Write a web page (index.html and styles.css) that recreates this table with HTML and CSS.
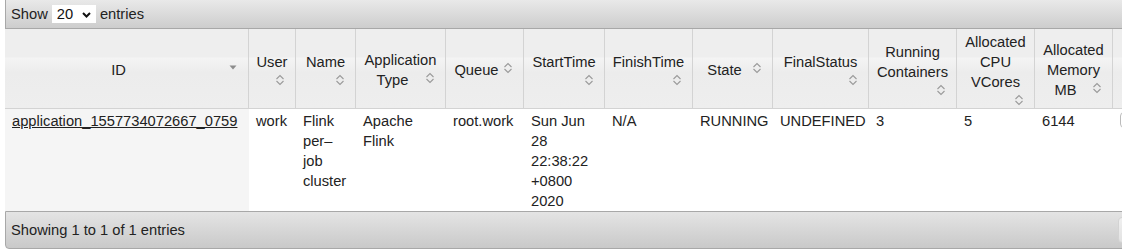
FILE: index.html
```html
<!DOCTYPE html>
<html lang="en">
<head>
<meta charset="utf-8">
<title>Applications</title>
<link rel="stylesheet" href="styles.css">
</head>
<body>
<svg class="icon-defs" aria-hidden="true">
  <symbol id="i-sort" viewBox="0 0 16 16"><path d="M4.5 7 8 3.5 11.5 7M4.5 9 8 12.5 11.5 9" fill="none" stroke="#9a9a9a" stroke-width="1.1"/></symbol>
  <symbol id="i-desc" viewBox="0 0 16 16"><path d="M4.5 5.5h7L8 9.5z" fill="#8c8c8c"/></symbol>
</svg>
<div class="dt-wrapper">
  <div class="toolbar toolbar-top">
    <label class="length">Show <span class="select-wrap"><select class="len-select"><option>20</option><option>40</option><option>60</option><option>80</option><option>100</option></select><svg class="select-caret" viewBox="0 0 9 6"><path d="M1 1 4.5 4.5 8 1" fill="none" stroke="#111" stroke-width="2"/></svg></span> entries</label>
  </div>
  <table class="apps">
    <thead>
      <tr>
        <th class="c-id">ID<span class="sort-icon"><svg><use href="#i-desc"/></svg></span></th>
        <th class="c-user">User<span class="sort-icon"><svg><use href="#i-sort"/></svg></span></th>
        <th class="c-name">Name<span class="sort-icon"><svg><use href="#i-sort"/></svg></span></th>
        <th class="c-type">Application Type<span class="sort-icon"><svg><use href="#i-sort"/></svg></span></th>
        <th class="c-queue">Queue<span class="sort-icon"><svg><use href="#i-sort"/></svg></span></th>
        <th class="c-start">StartTime<span class="sort-icon"><svg><use href="#i-sort"/></svg></span></th>
        <th class="c-finish">FinishTime<span class="sort-icon"><svg><use href="#i-sort"/></svg></span></th>
        <th class="c-state">State<span class="sort-icon"><svg><use href="#i-sort"/></svg></span></th>
        <th class="c-final">FinalStatus<span class="sort-icon"><svg><use href="#i-sort"/></svg></span></th>
        <th class="c-run">Running Containers<span class="sort-icon"><svg><use href="#i-sort"/></svg></span></th>
        <th class="c-cpu">Allocated CPU VCores<span class="sort-icon"><svg><use href="#i-sort"/></svg></span></th>
        <th class="c-mem">Allocated Memory MB<span class="sort-icon"><svg><use href="#i-sort"/></svg></span></th>
        <th class="c-prog"></th>
      </tr>
    </thead>
    <tbody>
      <tr>
        <td class="sorted"><a class="app-link" href="#">application_1557734072667_0759</a></td>
        <td>work</td>
        <td>Flink per–job cluster</td>
        <td>Apache Flink</td>
        <td>root.work</td>
        <td>Sun Jun 28 22:38:22 +0800 2020</td>
        <td>N/A</td>
        <td>RUNNING</td>
        <td>UNDEFINED</td>
        <td>3</td>
        <td>5</td>
        <td>6144</td>
        <td><div class="progress"></div></td>
      </tr>
    </tbody>
  </table>
  <div class="toolbar toolbar-bottom">
    <div class="info">Showing 1 to 1 of 1 entries</div>
    <div class="paginate"><span class="pg-btn"></span></div>
  </div>
</div>
</body>
</html>
```
FILE: styles.css
```css
html, body {
  margin: 0;
  padding: 0;
  background: #fff;
}
body {
  font-family: "Liberation Sans", Arial, Helvetica, sans-serif;
  font-size: 14.7px;
  line-height: 20px;
  color: #222;
  width: 1122px;
  height: 250px;
  overflow: hidden;
}
.icon-defs {
  position: absolute;
  width: 0;
  height: 0;
  overflow: hidden;
}
.dt-wrapper {
  margin-left: 5px;
  width: 1208px;
}
.toolbar {
  display: flex;
  align-items: center;
  padding: 0 5px;
  border: 1px solid #a8a8a8;
}
.toolbar-top {
  height: 28px;
  border-top: none;
  background: linear-gradient(#e9e9e9, #cdcdcd);
}
.length {
  white-space: nowrap;
}
.select-wrap {
  position: relative;
  display: inline-block;
  vertical-align: middle;
  width: 44px;
  height: 18px;
  margin-top: -3px;
}
.len-select {
  -webkit-appearance: none;
  appearance: none;
  display: block;
  width: 44px;
  height: 18px;
  margin: 0;
  padding: 0 0 0 5px;
  border: 0;
  border-radius: 0;
  background: #fff;
  font: inherit;
  line-height: 18px;
  color: #111;
}
.select-caret {
  position: absolute;
  left: 30px;
  top: 7px;
  width: 9px;
  height: 6px;
  pointer-events: none;
}
.apps {
  border-collapse: separate;
  border-spacing: 0;
  table-layout: fixed;
  width: 1208px;
}
.apps th {
  box-sizing: border-box;
  padding: 3px 7px 0;
  font-weight: normal;
  text-align: center;
  vertical-align: middle;
  color: #222;
  border-right: 1px solid #d3d3d3;
  border-bottom: 1px solid #d3d3d3;
  background: linear-gradient(#eeeeee 0%, #eeeeee 35%, #f4f4f4 37%, #ececec 55%, #eeeeee 100%);
}
.sort-icon {
  float: right;
  width: 16px;
  height: 16px;
}
.sort-icon svg {
  display: block;
  width: 16px;
  height: 16px;
}
.c-id { width: 244px; }
.c-user { width: 47px; }
.c-name { width: 60px; }
.c-type { width: 90px; }
.c-queue { width: 78px; }
.c-start { width: 81px; }
.c-finish { width: 88px; }
.c-state { width: 80px; }
.c-final { width: 96px; }
.c-run { width: 88px; }
.c-cpu { width: 78px; }
.c-mem { width: 78px; }
.c-prog { width: 100px; }
.apps td {
  padding: 2px 7px 0;
  vertical-align: top;
  text-align: left;
  background: #fff;
}
.apps td.sorted {
  background: #f5f5f5;
}
.app-link {
  color: #222;
  text-decoration: underline;
}
.progress {
  width: 80px;
  height: 16px;
  margin-top: 1px;
  box-sizing: border-box;
  border: 1px solid #bbb;
  border-radius: 4px;
  background: #fff;
}
.toolbar-bottom {
  height: 36px;
  border-radius: 0 0 4px 4px;
  background: linear-gradient(#e4e4e4, #c9c9c9);
}
.info {
  flex: 1;
}
.paginate {
  width: 89px;
  overflow: hidden;
  display: flex;
}
.pg-btn {
  flex: none;
  width: 60px;
  height: 24px;
  border: 1px solid #d3d3d3;
  border-radius: 4px;
  background: linear-gradient(#f0f0f0, #e2e2e2);
}
```
